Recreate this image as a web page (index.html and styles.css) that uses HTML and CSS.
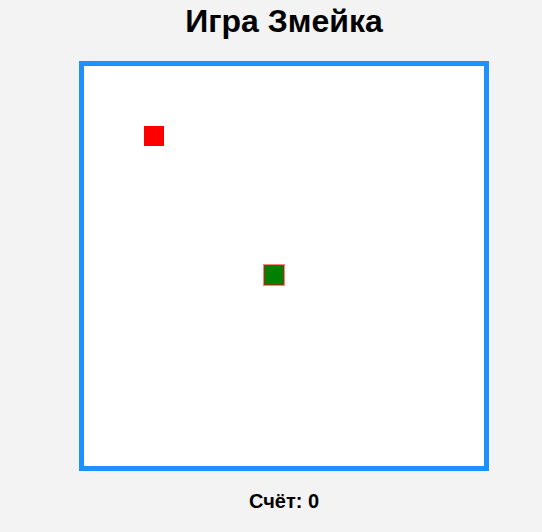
FILE: index.html
```html
<!DOCTYPE html>
<html lang="ru">
<head>
<meta charset="utf-8">
<title>Игра Змейка</title>
<link rel="stylesheet" href="styles.css">
</head>
<body>
<main class="game">
  <h1 class="title">Игра Змейка</h1>
  <div class="board">
    <div class="cell food" style="left:60px;top:60px"></div>
    <div class="cell snake" style="left:180px;top:199px"></div>
  </div>
  <div class="score">Счёт: 0</div>
</main>
</body>
</html>
```

FILE: styles.css
```css
html, body {
  margin: 0;
  background: #f3f3f3;
}
body {
  padding-left: 26px;
  font-family: "Liberation Sans", Arial, sans-serif;
}
.game {
  display: flex;
  flex-direction: column;
  align-items: center;
}
.title {
  margin: 3px 0 0;
  font-size: 32px;
  line-height: 37px;
  font-weight: bold;
  color: #000;
}
.board {
  position: relative;
  margin-top: 21px;
  width: 400px;
  height: 400px;
  border: 5px solid #1e90ff;
  background: #fff;
}
.cell {
  position: absolute;
  width: 20px;
  height: 20px;
}
.food {
  background: #ff0000;
}
.snake {
  background: #008000;
  box-shadow: 0 0 0 1px #ff8080, inset 0 0 0 1px #804000;
}
.score {
  margin-top: 19px;
  font-size: 20px;
  line-height: 23px;
  font-weight: bold;
  color: #000;
}
```
